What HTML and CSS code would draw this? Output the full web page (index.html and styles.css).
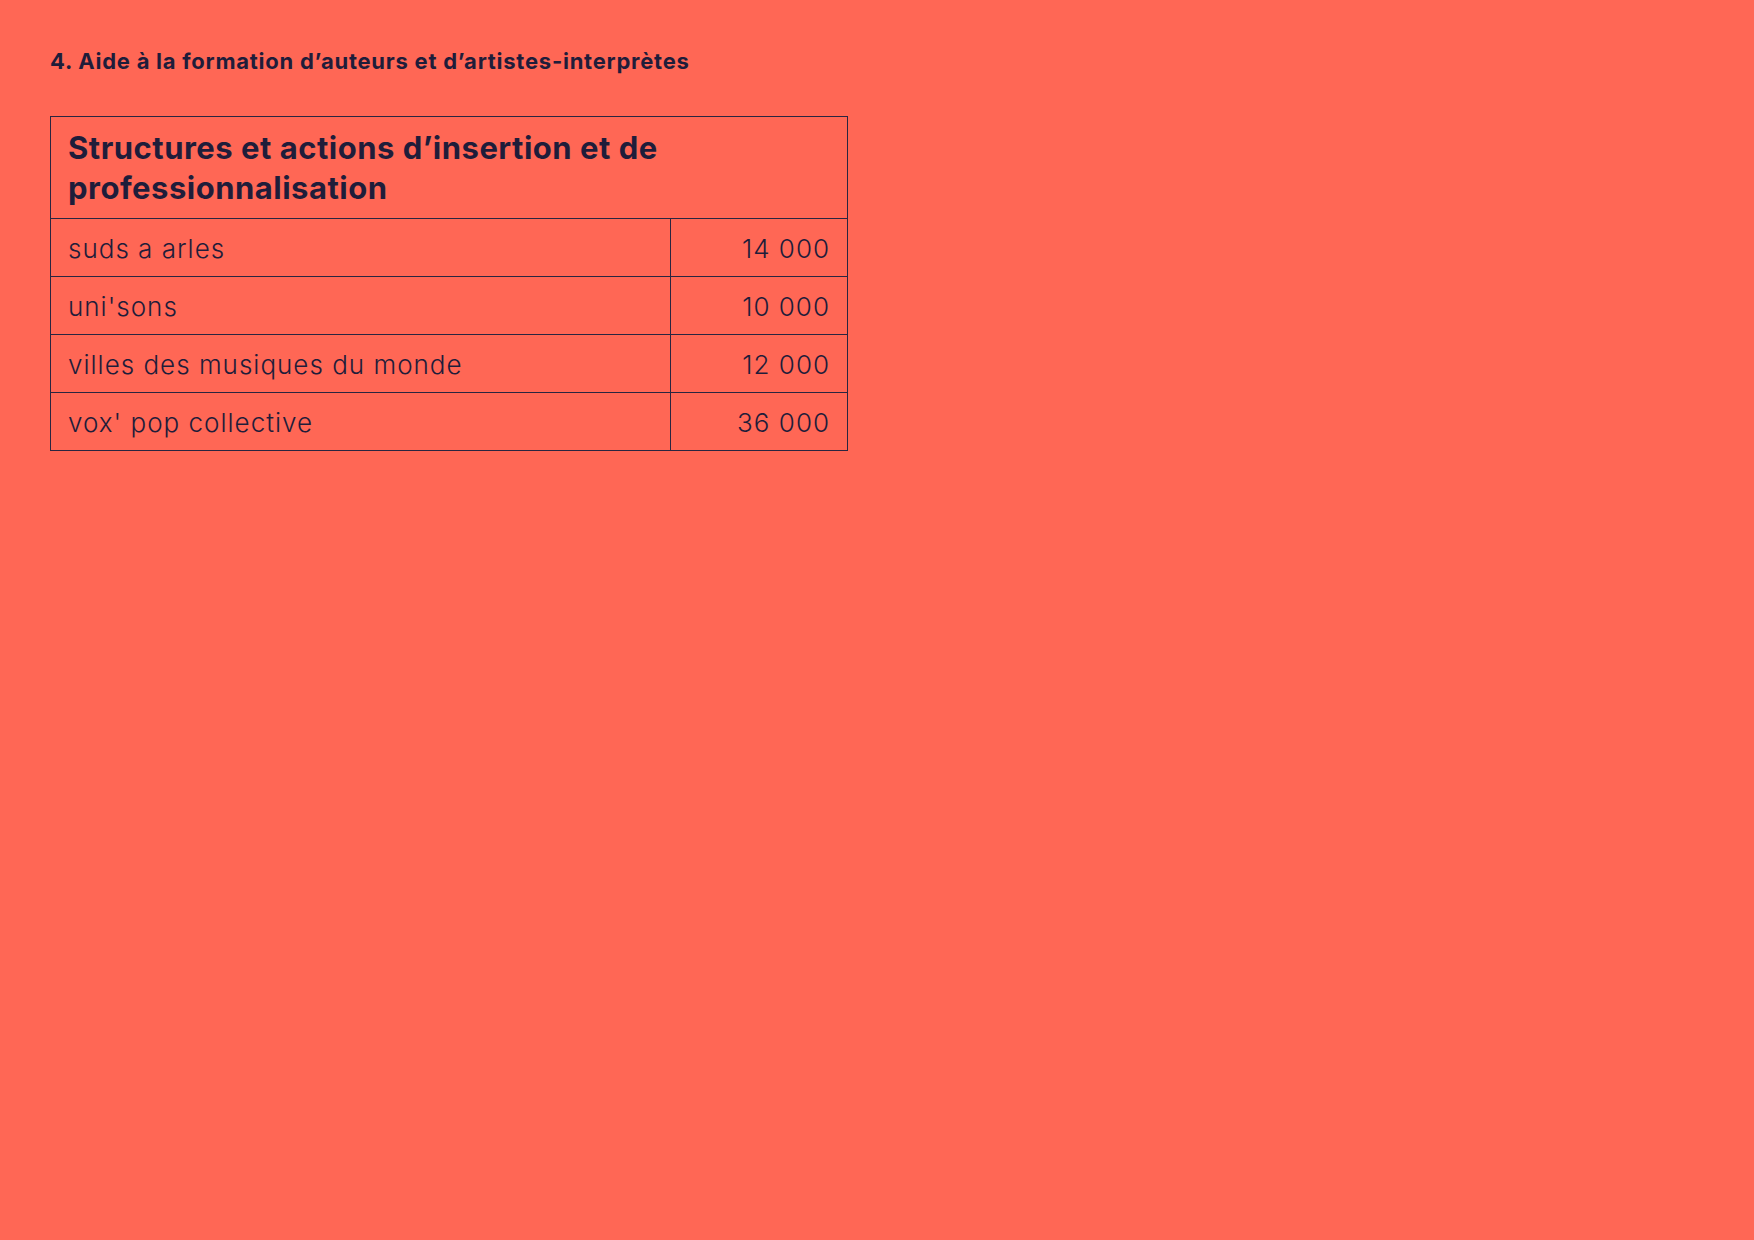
FILE: index.html
```html
<!DOCTYPE html>
<html lang="fr">
<head>
<meta charset="utf-8">
<title>Aide à la formation</title>
<link rel="stylesheet" href="styles.css">
</head>
<body>
<main class="page">
  <h1 class="section-title">4. Aide à la formation d’auteurs et d’artistes-interprètes</h1>
  <table class="grant-table">
    <thead>
      <tr>
        <th class="grant-head" colspan="2">Structures et actions d’insertion et de professionnalisation</th>
      </tr>
    </thead>
    <tbody>
      <tr><td class="name">suds a arles</td><td class="amount">14 000</td></tr>
      <tr><td class="name">uni'sons</td><td class="amount">10 000</td></tr>
      <tr><td class="name">villes des musiques du monde</td><td class="amount">12 000</td></tr>
      <tr><td class="name">vox' pop collective</td><td class="amount">36 000</td></tr>
    </tbody>
  </table>
</main>
</body>
</html>
```

FILE: styles.css
```css
html, body {
  margin: 0;
  padding: 0;
}
body {
  background: #ff6755;
  color: #1f1d3a;
  font-family: Inter, "Liberation Sans", sans-serif;
  width: 1754px;
  height: 1240px;
}
.page {
  padding: 48px 50px 0 50px;
}
.section-title {
  margin: 0;
  font-size: 22px;
  line-height: 26px;
  font-weight: 700;
  letter-spacing: 0.75px;
}
.grant-table {
  margin-top: 42px;
  border-collapse: collapse;
  width: 798px;
}
.grant-table th,
.grant-table td {
  border: 1px solid #2a2540;
}
.grant-head {
  text-align: left;
  font-size: 31px;
  line-height: 40px;
  font-weight: 700;
  letter-spacing: 0.5px;
  padding: 11px 17px 10px 17px;
}
.grant-table td {
  font-size: 26px;
  line-height: 30px;
  font-weight: 300;
  letter-spacing: 1px;
  padding: 15px 17px 12px 17px;
}
.grant-table .name {
  width: 585px;
}
.grant-table .amount {
  text-align: right;
}
```
